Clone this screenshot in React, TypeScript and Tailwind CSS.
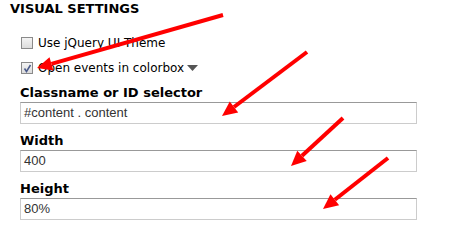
import React from 'react';

const arrows = [
  { x1: 223, y1: 15, x2: 37, y2: 68 },
  { x1: 307, y1: 52, x2: 222, y2: 116 },
  { x1: 343, y1: 118, x2: 291, y2: 166 },
  { x1: 388, y1: 158, x2: 323, y2: 209 },
];

const Arrow = ({ x1, y1, x2, y2 }: { x1: number; y1: number; x2: number; y2: number }) => {
  const a = Math.atan2(y2 - y1, x2 - x1);
  const len = 15;
  const half = 7;
  const bx = x2 - len * Math.cos(a);
  const by = y2 - len * Math.sin(a);
  const px = -Math.sin(a) * half;
  const py = Math.cos(a) * half;
  return (
    <g>
      <line x1={x1} y1={y1} x2={bx} y2={by} stroke="#ff0000" strokeWidth="4" />
      <polygon points={`${x2},${y2} ${bx + px},${by + py} ${bx - px},${by - py}`} fill="#ff0000" />
    </g>
  );
};

const Field = ({ label, value }: { label: string; value: string }) => (
  <div className="flex flex-col">
    <label className="text-[13px] font-bold text-black leading-[15px] pl-[10px]">{label}</label>
    <div className="ml-[10px] mt-[2px] w-[397px] h-[22px] border border-[#cccccc] border-t-[#999999] bg-white flex items-center px-[3px] text-[13px] text-[#333333] font-['Liberation_Sans',Arial,sans-serif]">
      {value}
    </div>
  </div>
);

const Checkbox = ({ checked }: { checked?: boolean }) => (
  <span className="w-[12px] h-[12px] border border-[#8a8a8a] bg-gradient-to-b from-[#f4f4f4] to-[#dcdcdc] flex items-center justify-center">
    {checked && (
      <svg width="9" height="9" viewBox="0 0 9 9">
        <path d="M1.5 4.5 L3.5 7.5 L7.5 1" fill="none" stroke="#4a5a8a" strokeWidth="1.5" />
      </svg>
    )}
  </span>
);

export default function App() {
  return (
    <div className="relative w-[469px] h-[231px] bg-white overflow-hidden font-['DejaVu_Sans',Verdana,sans-serif]">
      <div className="pl-[10px] pt-[2px]">
        <h2 className="text-[13px] font-bold text-black leading-[14px]">VISUAL SETTINGS</h2>
        <div className="mt-[21px] flex flex-col gap-[13px] pl-[11px] text-[12px] text-black">
          <div className="flex items-center gap-[5px] h-[12px]">
            <Checkbox />
            <span>Use jQuery UI Theme</span>
          </div>
          <div className="flex items-center gap-[5px] h-[12px]">
            <Checkbox checked />
            <span>Open events in colorbox</span>
            <svg width="11" height="6" viewBox="0 0 11 6" className="ml-[-2px] mt-[-1px]">
              <polygon points="0,0 11,0 5.5,6" fill="#555555" />
            </svg>
          </div>
        </div>
        <div className="mt-[11px] flex flex-col gap-[9px]">
          <Field label="Classname or ID selector" value="#content . content" />
          <Field label="Width" value="400" />
          <Field label="Height" value="80%" />
        </div>
      </div>
      <svg className="absolute inset-0 pointer-events-none" width="469" height="231">
        {arrows.map((a, i) => (
          <Arrow key={i} {...a} />
        ))}
      </svg>
    </div>
  );
}
